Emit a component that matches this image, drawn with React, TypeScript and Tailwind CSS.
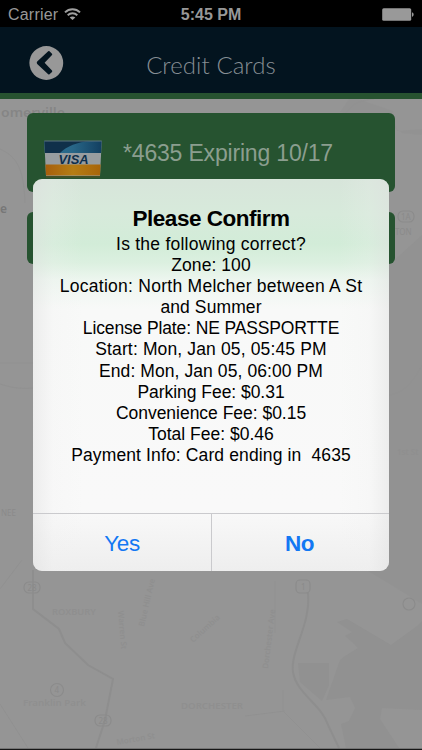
const details = [
  { text: "Is the following correct?", tracking: "tracking-[0.24px]" },
  { text: "Zone: 100", tracking: "tracking-[0.07px]" },
  { text: "Location: North Melcher between A St", tracking: "tracking-[0.27px]" },
  { text: "and Summer", tracking: "tracking-[0.1px]" },
  { text: "License Plate: NE PASSPORTTE", tracking: "tracking-[-0.13px]" },
  { text: "Start: Mon, Jan 05, 05:45 PM", tracking: "tracking-[0.14px]" },
  { text: "End: Mon, Jan 05, 06:00 PM", tracking: "tracking-[0.08px]" },
  { text: "Parking Fee: $0.31", tracking: "tracking-[-0.04px]" },
  { text: "Convenience Fee: $0.15", tracking: "tracking-[-0.02px]" },
  { text: "Total Fee: $0.46", tracking: "tracking-normal" },
  { text: "Payment Info: Card ending in \u00a04635", tracking: "tracking-[0.13px]" },
]

function StatusBar() {
  return (
    <div className="grid h-[27px] grid-cols-3 items-center bg-black pt-[3px] text-[16px] text-[#989898]">
      <div className="flex items-center gap-[6px] pl-2">
        <span className="tracking-[0.2px]">Carrier</span>
        <svg className="-mt-[3px]" width="17" height="12" viewBox="0 0 17 12" fill="none" stroke="#a0a0a0" strokeWidth="2">
          <path d="M1 4.4C5.2.2 11.8.2 16 4.4" />
          <path d="M3.7 7.3C6.4 4.7 10.6 4.7 13.3 7.3" />
          <path d="M8.5 12 5.7 9.5C7.3 8 9.7 8 11.3 9.5Z" fill="#a0a0a0" stroke="none" />
        </svg>
      </div>
      <div className="text-center font-bold whitespace-nowrap">5:45 PM</div>
      <div className="flex justify-end pr-2">
        <svg className="-mt-[2px]" width="32" height="13" viewBox="0 0 32 13">
          <rect x="0.2" y="0.2" width="29" height="12.6" rx="1.5" fill="#999" />
          <path d="M30 4.2C32.2 5 32.2 8 30 8.8Z" fill="#999" />
        </svg>
      </div>
    </div>
  )
}

function Header() {
  return (
    <header className="relative flex h-[72px] items-center justify-center border-b-[6px] border-[#275330] bg-[#03141f]">
      <button className="absolute top-[19px] left-[29px]">
        <svg width="35" height="35" viewBox="0 0 35 35">
          <circle cx="17.3" cy="17" r="16.9" fill="#989898" />
          <path
            d="M19.2 5.3 8.2 15.6Q7.2 16.8 8.2 18L19.2 28.3Q19.9 28.7 20.5 28.3L23 25.9Q23.5 25.2 23 24.5L15.6 16.8 23 9.1Q23.5 8.4 23 7.7L20.5 5.3Q19.9 4.9 19.2 5.3Z"
            fill="#03141f"
          />
        </svg>
      </button>
      <h1 className="pt-[9px] font-[Lato] text-[24px] font-light tracking-[0.07px] text-[#868e94]">Credit Cards</h1>
    </header>
  )
}

function VisaLogo() {
  return (
    <svg className="mt-[27px] ml-[17px] shrink-0" width="59" height="38" viewBox="0 0 59 38">
      <defs>
        <linearGradient id="blue" x1="0" x2="1">
          <stop offset="0" stopColor="#2f7194" />
          <stop offset="0.5" stopColor="#286687" />
          <stop offset="1" stopColor="#123f60" />
        </linearGradient>
        <linearGradient id="gold" x1="0" x2="1">
          <stop offset="0" stopColor="#a65f0c" />
          <stop offset="0.5" stopColor="#b57d14" />
          <stop offset="1" stopColor="#a8650a" />
        </linearGradient>
      </defs>
      <path d="M.3 1H57.7L56 36H2Z" fill="#989da0" />
      <path d="M.3 1H57.7L57.1 13H.9Z" fill="url(#blue)" />
      <path d="M.3 1H47C33 2 23 6 16 13H.9Z" fill="#10304a" />
      <path d="M1.4 24.6H56.6L56 35.6H2Z" fill="url(#gold)" />
      <path d="M.3 1H57.7" stroke="#5d757e" strokeWidth="1" />
      <text x="29.5" y="23.8" textAnchor="middle" textLength="30" lengthAdjust="spacingAndGlyphs" fontFamily="Liberation Sans" fontStyle="italic" fontWeight="bold" fontSize="13.5" fill="#0e2f4b">
        VISA
      </text>
      <path d="M2 37H56" stroke="#4a5226" strokeWidth="1.4" />
    </svg>
  )
}

function MapBackdrop() {
  return (
    <svg className="absolute inset-0" width="422" height="651" viewBox="0 99 422 651" fill="none">
      <rect y="99" width="422" height="651" fill="#959595" />
      {/* water */}
      <g fill="#919191">
        <path d="M422 129 397 131 393 111 358 99H349L340 112 386 122 402 133 422 135Z" opacity="0.7" />
        <path d="M389 265 422 235V560H389Z" opacity="0.8" />
        <path d="M368 571 393 586 422 604V560H389Z" opacity="0.7" />
        <path d="M347 619 391 645 417 626 422 621V710L382 708 380 719 399 748H346L341 724 349 721 355 708 350 697 326 700 340 660 345 656 358 648 352 642 345 636 352 632 337 622Z" />
        <path d="M298 663H329V685L322 701 300 682Z" />
      </g>
      {/* main roads */}
      <g stroke="#8e8e8e" strokeWidth="2">
        <path d="M33 570V609L59 629 65 643 88 665 113 679 105 720 96 748" />
        <path d="M308 593C311 625 290 651 293 672C296 693 322 705 328 725L339 748" />
      </g>
      <g stroke="#919191" strokeWidth="1">
        <path d="M283 690V711L320 748M245 716 285 711" />
        <path d="M346 113C352 104 360 100 374 99" />
        <path d="M0 589 22 560M0 704 28 748M275 581V633" />
        <path d="M0 149C18 157 24 171 25 203" />
        <path d="M0 363H33M0 384C12 388 22 389 33 388" />
        <path d="M389 395C404 393 413 382 422 365" />
      </g>
      {/* route shields */}
      <g stroke="#8b8b8b" strokeWidth="1.1">
        <rect x="24" y="582" width="16" height="11" rx="5" />
        <circle cx="57" cy="690" r="6.5" />
        <rect x="95" y="715" width="16" height="11" rx="5" />
        <rect x="296" y="580" width="14" height="13" rx="4" />
        <circle cx="409" cy="604" r="6" />
        <rect x="398" y="211" width="16" height="11" rx="5" />
      </g>
      <g fill="#8a8a8a" fontFamily="Noto Sans" fontSize="8">
        <text x="1" y="117" fontSize="12" fontWeight="600" textLength="64" lengthAdjust="spacingAndGlyphs" fill="#858585">omerville</text>
        <text x="0" y="213" fontSize="12" fontWeight="600" fill="#777">e</text>
        <text x="395" y="235">TON</text>
        <text x="27.5" y="591">28</text>
        <text x="54.5" y="693">4</text>
        <text x="98.5" y="724">28</text>
        <text x="301" y="590">1</text>
        <text x="401" y="220">1A</text>
        <text x="1" y="516">NEE</text>
      </g>
      <g fill="#8f8f8f" fontFamily="Noto Sans" fontSize="8" fontWeight="600">
        <text x="52" y="615" textLength="44" lengthAdjust="spacingAndGlyphs">ROXBURY</text>
        <text x="23" y="706" textLength="63" lengthAdjust="spacingAndGlyphs">Franklin Park</text>
        <text x="181" y="709" textLength="62" lengthAdjust="spacingAndGlyphs">DORCHESTER</text>
        <text x="117" y="745" transform="rotate(-10 117 745)">Morton St</text>
        <text x="118" y="611" transform="rotate(85 118 611)">Warren St</text>
        <text x="144" y="627" transform="rotate(-77 144 627)">Blue Hill Ave</text>
        <text x="268" y="669" transform="rotate(-83 268 669)">Dorchester Ave</text>
        <text x="193" y="643" transform="rotate(-42 193 643)">Columbia</text>
        <text x="397" y="455">1st St</text>
      </g>
      <path d="M0 749.5H422" stroke="#161616" strokeWidth="1.4" />
    </svg>
  )
}

function ConfirmDialog() {
  return (
    <div className="absolute top-[179px] left-[33px] flex h-[392px] w-[356px] flex-col overflow-hidden rounded-[9px] bg-[linear-gradient(to_bottom,#d7e5da_0,#d7eadb_35px,#d2ecd8_65px,#dcf0e0_84px,#edf6ef_101px,#f8f9f8_130px,#f9f9f9_330px,#eeeeee_392px)] text-black">
      {/* soft grey falloff along both sides */}
      <div className="pointer-events-none absolute inset-0 bg-[linear-gradient(to_right,rgba(225,225,225,0.5)_0,rgba(240,240,240,0.2)_20px,rgba(245,245,245,0)_50px,rgba(245,245,245,0)_306px,rgba(240,240,240,0.2)_336px,rgba(225,225,225,0.5)_356px)]" />
      <div className="relative h-[334px] pt-[27px] text-center">
        <h2 className="text-[22.5px] leading-[26px] font-bold tracking-[-0.5px]">Please Confirm</h2>
        <div className="pt-[2px]">
          {details.map((line) => (
            <p key={line.text} className={`text-[17.5px] leading-[21.1px] whitespace-nowrap ${line.tracking}`}>
              {line.text}
            </p>
          ))}
        </div>
      </div>
      <div className="relative grid flex-1 grid-cols-[179px_177px] border-t border-[#cacacd] text-[22.5px] text-[#1378f3]">
        <button className="border-r border-[#cacacd] pt-[3px] tracking-[-0.4px]">Yes</button>
        <button className="pt-[3px] pr-[2px] font-bold tracking-[-0.4px]">No</button>
      </div>
    </div>
  )
}

export default function App() {
  return (
    <div className="relative flex h-[750px] w-[422px] flex-col overflow-hidden font-['Liberation_Sans',sans-serif]">
      <StatusBar />
      <Header />
      <main className="relative flex-1">
        <MapBackdrop />
        <div className="relative flex flex-col gap-5 px-[27px] pt-[14px]">
          <div className="flex h-[79px] w-[368px] rounded-[6px] bg-[#265330]">
            <VisaLogo />
            <span className="mt-[25px] ml-[20px] text-[23px] leading-[30px] tracking-[-0.18px] whitespace-nowrap text-[#8b9e8f]">
              *4635 Expiring 10/17
            </span>
          </div>
          <div className="h-[52px] w-[368px] rounded-[6px] bg-[#265330]" />
        </div>
      </main>
      <ConfirmDialog />
    </div>
  )
}
